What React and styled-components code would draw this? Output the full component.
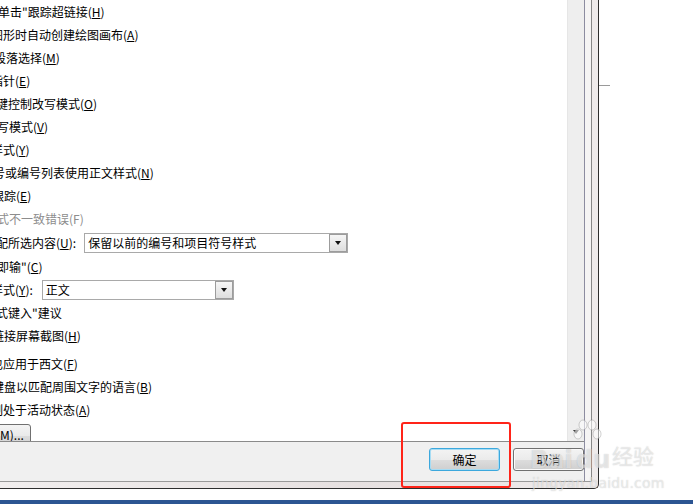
import React from "react";
import styled, { createGlobalStyle } from "styled-components";

const GlobalStyle = createGlobalStyle`
  html, body {
    margin: 0;
    padding: 0;
    background: #ffffff;
  }
  #root {
    width: 693px;
    height: 504px;
  }
`;

const Screen = styled.div`
  position: relative;
  width: 693px;
  height: 504px;
  overflow: hidden;
  display: flex;
  flex-direction: column;
  background: #ffffff;
  font-family: "Noto Sans CJK SC", "Microsoft YaHei", sans-serif;
  font-size: 12px;
  color: #000;
`;

const Dialog = styled.div`
  box-sizing: border-box;
  flex-shrink: 0;
  width: 599px;
  height: 489px;
  padding: 0 6px 6px 0;
  background: linear-gradient(90deg, #f1eeee, #e6e0e0 60%, #efebeb);
  border-right: 1px solid #2e2e2e;
  border-bottom: 1px solid #2e2e2e;
  border-bottom-right-radius: 5px;
`;

const Frame = styled.div`
  box-sizing: border-box;
  height: 100%;
  display: flex;
  background: #f6f5f5;
  border-right: 1px solid #878787;
  border-bottom: 1px solid #999999;
`;

const Inner = styled.div`
  width: 584px;
  display: flex;
  flex-direction: column;
  border-right: 1px solid #8c8ca0;
`;

const Content = styled.div`
  box-sizing: border-box;
  flex-shrink: 0;
  height: 442px;
  display: flex;
  border-bottom: 1px solid #8a8a8a;
  background: #ffffff;
`;

const List = styled.div`
  flex: 1;
  overflow: hidden;
  display: flex;
  flex-direction: column;
`;

const Row = styled.div`
  flex-shrink: 0;
  height: ${(p) => p.h || 23}px;
  margin-top: ${(p) => p.mt || 0}px;
  display: flex;
  align-items: center;
  white-space: nowrap;
  line-height: 16px;
  color: ${(p) => (p.disabled ? "#8d8d8d" : "#000")};
`;

const Label = styled.span`
  margin-left: ${(p) => -(p.clip || 0)}px;
`;

const Select = styled.div`
  box-sizing: border-box;
  width: ${(p) => p.w}px;
  height: 20px;
  margin-left: ${(p) => p.gap}px;
  display: flex;
  align-items: center;
  justify-content: space-between;
  border: 1px solid #a9a9a9;
  background: #fff;
  padding-left: 3px;
`;

const SelectButton = styled.div`
  box-sizing: border-box;
  width: 18px;
  height: 18px;
  display: flex;
  align-items: center;
  justify-content: center;
  border: 1px solid #9c9c9c;
  background: linear-gradient(#f6f6f6, #dedede);
  &::after {
    content: "";
    border-top: 4px solid #111;
    border-left: 3.5px solid transparent;
    border-right: 3.5px solid transparent;
    margin-top: 1px;
  }
`;

const SmallButton = styled.div`
  box-sizing: border-box;
  flex-shrink: 0;
  margin: 3px 0 0 -20px;
  height: 23px;
  padding: 2px 6px 0 15px;
  align-self: flex-start;
  border: 1px solid #707070;
  border-radius: 3px;
  background: linear-gradient(#f4f4f4, #eaeaea 50%, #dcdcdc 51%, #d2d2d2);
  line-height: 16px;
  white-space: nowrap;
`;

const Scrollbar = styled.div`
  width: 16px;
  display: flex;
  flex-direction: column;
  justify-content: flex-end;
  align-items: center;
  padding-bottom: 7px;
  background: #eeeeee;
  border-left: 1px solid #e6e6e6;
  &::after {
    content: "";
    border-top: 4px solid #333;
    border-left: 3.5px solid transparent;
    border-right: 3.5px solid transparent;
  }
`;

const ButtonBar = styled.div`
  flex: 1;
  display: flex;
  justify-content: flex-end;
  align-items: flex-start;
  gap: 13px;
  padding-top: 6px;
  background: #f0f0f0;
`;

const DlgButton = styled.div`
  box-sizing: border-box;
  width: 71px;
  height: 23px;
  display: flex;
  align-items: center;
  justify-content: center;
  border: 1px solid ${(p) => (p.focused ? "#3ca8dd" : "#707070")};
  box-shadow: ${(p) => (p.focused ? "inset 0 0 0 1px #a6dcf4" : "inset 0 0 0 1px #fbfbfb")};
  border-radius: 3px;
  background: linear-gradient(#f3f3f3, #ebebeb 50%, #dddddd 51%, #cfcfcf);
  font-size: 12px;
`;

const Gap = styled.div`
  width: 6px;
  background: #f5f4f4;
`;

const Spacer = styled.div`
  flex: 1;
`;

const Taskbar = styled.div`
  height: 4px;
  background: #2c5592;
`;

const Tick = styled.div`
  position: absolute;
  left: 599px;
  top: 85px;
  width: 11px;
  height: 1px;
  background: #9a9a9a;
`;

const Annotation = styled.div`
  position: absolute;
  left: 401px;
  top: 422px;
  width: 110px;
  height: 66px;
  box-sizing: border-box;
  border: 2.5px solid #ff2419;
  border-radius: 3px;
`;

const Watermark = styled.div`
  position: absolute;
  left: 528px;
  top: 418px;
  width: 132px;
  height: 82px;
  pointer-events: none;
  font-family: "DejaVu Sans", "Liberation Sans", sans-serif;
  color: rgba(255, 255, 255, 0.55);
  text-shadow: 0 0 1px rgba(90, 90, 90, 0.35);
`;

const Mark = styled.span`
  position: absolute;
  left: ${(p) => p.x}px;
  top: ${(p) => p.y}px;
  font-size: ${(p) => p.size}px;
  font-weight: ${(p) => p.weight || 400};
  font-family: ${(p) => (p.cjk ? '"Noto Sans CJK SC", sans-serif' : "inherit")};
  letter-spacing: ${(p) => p.ls || 0}px;
  white-space: nowrap;
  line-height: 1;
`;

const Paw = () => (
  <svg
    width="30"
    height="30"
    viewBox="0 0 30 30"
    style={{ position: "absolute", left: 44, top: 1 }}
    fill="rgba(255,255,255,0.55)"
    stroke="rgba(120,120,120,0.35)"
    strokeWidth="1"
  >
    <ellipse cx="6" cy="15" rx="4" ry="5" />
    <ellipse cx="11" cy="6" rx="4" ry="5" />
    <ellipse cx="20" cy="6" rx="4" ry="5" />
    <ellipse cx="25" cy="15" rx="4" ry="5" />
  </svg>
);

const U = ({ children }) => <u>{children}</u>;

const rows = [
  { text: '单击"跟踪超链接', key: "H", clip: 2 },
  { text: "图形时自动创建绘图画布", key: "A", clip: 9 },
  { text: "段落选择", key: "M", clip: 6 },
  { text: "指针", key: "E", clip: 9 },
  { text: "键控制改写模式", key: "O", clip: 4 },
  { text: "写模式", key: "V", clip: 3 },
  { text: "样式", key: "Y", clip: 9 },
  { text: "号或编号列表使用正文样式", key: "N", clip: 7 },
  { text: "跟踪", key: "E", clip: 8 },
];

export default function App() {
  return (
    <>
      <GlobalStyle />
      <Screen>
        <Dialog>
          <Frame>
            <Inner>
              <Content>
                <List>
                  {rows.map((r, i) => (
                    <Row key={i}>
                      <Label clip={r.clip}>
                        {r.text}(<U>{r.key}</U>)
                      </Label>
                    </Row>
                  ))}
                  <Row disabled>
                    <Label clip={3}>式不一致错误(F)</Label>
                  </Row>
                  <Row h={25}>
                    <Label clip={4}>
                      配所选内容(<U>U</U>):
                    </Label>
                    <Select w={264} gap={8}>
                      <span>保留以前的编号和项目符号样式</span>
                      <SelectButton />
                    </Select>
                  </Row>
                  <Row>
                    <Label clip={3}>
                      即输"(<U>C</U>)
                    </Label>
                  </Row>
                  <Row>
                    <Label clip={9}>
                      样式(<U>Y</U>):
                    </Label>
                    <Select w={192} gap={9}>
                      <span>正文</span>
                      <SelectButton />
                    </Select>
                  </Row>
                  <Row>
                    <Label clip={4}>式键入"建议</Label>
                  </Row>
                  <Row>
                    <Label clip={8}>
                      链接屏幕截图(<U>H</U>)
                    </Label>
                  </Row>
                  <Row mt={5}>
                    <Label clip={9}>
                      也应用于西文(<U>F</U>)
                    </Label>
                  </Row>
                  <Row>
                    <Label clip={8}>
                      键盘以匹配周围文字的语言(<U>B</U>)
                    </Label>
                  </Row>
                  <Row>
                    <Label clip={9}>
                      制处于活动状态(<U>A</U>)
                    </Label>
                  </Row>
                  <SmallButton>
                    (<U>M</U>)...
                  </SmallButton>
                </List>
                <Scrollbar />
              </Content>
              <ButtonBar>
                <DlgButton focused>确定</DlgButton>
                <DlgButton>取消</DlgButton>
              </ButtonBar>
            </Inner>
            <Gap />
          </Frame>
        </Dialog>
        <Spacer />
        <Taskbar />
        <Tick />
        <Annotation />
        <Watermark>
          <Paw />
          <Mark x={2} y={30} size={24} weight={700}>
            Bai
          </Mark>
          <Mark x={48} y={30} size={24} weight={700}>
            du
          </Mark>
          <Mark x={84} y={27} size={21} cjk>
            经验
          </Mark>
          <Mark x={4} y={58} size={14} ls={0.2}>
            jingyan.baidu.com
          </Mark>
        </Watermark>
      </Screen>
    </>
  );
}
